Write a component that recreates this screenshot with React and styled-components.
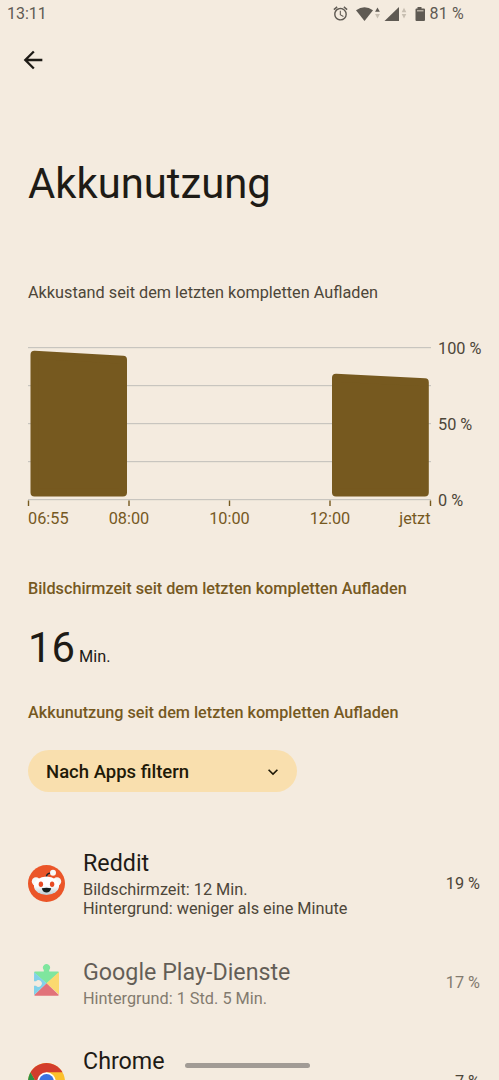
import React from 'react';
import styled, {createGlobalStyle} from 'styled-components';

const GlobalStyle = createGlobalStyle`
  * { box-sizing: border-box; }
  html, body { margin: 0; padding: 0; background: #f4ebdf; }
  body { font-family: Roboto, "Liberation Sans", sans-serif; overflow: hidden; }
  svg { display: block; flex: none; }
`;

const Screen = styled.div`
  width: 499px;
  height: 1080px;
  overflow: hidden;
  background: #f4ebdf;
  color: #1e1b16;
`;

const StatusBar = styled.div`
  display: flex;
  align-items: center;
  justify-content: space-between;
  height: 27px;
  padding: 0 35px 0 7px;
  font-size: 16px;
  color: #5f5a53;
`;

const StatusIcons = styled.div`
  display: flex;
  align-items: center;
`;

const Battery = styled.span`
  margin-left: 4px;
  letter-spacing: 0.2px;
`;

const AppBar = styled.div`
  display: flex;
  align-items: center;
  height: 66px;
  padding-left: 18.5px;
`;

const Content = styled.main`
  padding: 0 19px 0 28px;
`;

const Title = styled.h1`
  margin: 66px 0 0;
  font-size: 41.8px;
  line-height: 50px;
  font-weight: 400;
`;

const ChartTitle = styled.div`
  margin-top: 74px;
  font-size: 16.25px;
  line-height: 20px;
  color: #4d4639;
`;

const Chart = styled.svg`
  margin: 29px 0 0 -28px;
  font-size: 16.3px;
`;

const SectionTitle = styled.h2`
  margin: ${props => props.$top}px 0 0;
  font-size: 16.22px;
  line-height: 20px;
  font-weight: 500;
  color: #76591f;
`;

const ScreenTime = styled.div`
  display: flex;
  align-items: baseline;
  gap: 4px;
  height: 50px;
  margin-top: 24px;
  line-height: 50px;
`;

const Big = styled.span`
  font-size: 41.8px;
`;

const Unit = styled.span`
  font-size: 16.3px;
`;

const Filter = styled.button`
  display: flex;
  align-items: center;
  justify-content: space-between;
  width: 269px;
  height: 42px;
  margin-top: 27px;
  padding: 1px 14px 0 18px;
  border: 0;
  border-radius: 21px;
  background: #f9dfae;
  color: #1f1a08;
  font: 500 18.5px Roboto, sans-serif;
`;

const AppList = styled.div`
  display: flex;
  flex-direction: column;
  gap: 39.5px;
  margin-top: 57px;
`;

const Row = styled.div`
  display: flex;
  align-items: center;
  opacity: ${props => props.$dim ? 0.68 : 1};
`;

const AppIcon = styled.div`
  width: 37px;
  margin: -1px 18px 0 0;
`;

const Info = styled.div`
  flex: 1;
`;

const Name = styled.div`
  padding-bottom: 2px;
  font-size: 23.25px;
  line-height: 29px;
`;

const Detail = styled.div`
  font-size: 16.3px;
  line-height: 19px;
  min-height: 19px;
  color: #4d4639;
`;

const Percent = styled.div`
  font-size: 16.3px;
  color: #4d4639;
`;

const HomeBar = styled.div`
  position: fixed;
  left: 185px;
  top: 1063px;
  width: 125px;
  height: 5px;
  border-radius: 3px;
  background: #a19b95;
`;

const AlarmIcon = () => (
    <svg width="17" height="17" viewBox="0 0 24 24" fill="#5f5a53">
        <path d="M22 5.72l-4.6-3.86-1.29 1.53 4.6 3.86L22 5.72zM7.88 3.39L6.6 1.86 2 5.71l1.29 1.53 4.59-3.85zM12.5 8H11v6l4.75 2.85.75-1.23-4-2.37V8zM12 4c-4.97 0-9 4.03-9 9s4.02 9 9 9a9 9 0 0 0 0-18zm0 16c-3.87 0-7-3.13-7-7s3.13-7 7-7 7 3.13 7 7-3.13 7-7 7z"/>
    </svg>
);

/*Wifi, señal y bateria*/
const SignalIcons = () => (
    <svg width="70" height="16" viewBox="0 0 70 16" style={{marginLeft: 7}}>
        <g fill="#5f5a53">
            <path d="M0 4.2Q8.5-1.8 17 4.2L8.5 15z"/>
            <path d="M19.1 5.8 21.5 1.4 23.9 5.8z"/>
            <path d="M28.5 15H43V1z"/>
            <path d="M61.5 1h4v1.5H68a1 1 0 0 1 1 1V14a1 1 0 0 1-1 1h-7.500a1 1 0 0 1-1-1V3.500a1 1 0 0 1 1-1h1z"/>
        </g>
        <path fill="#c8bfb2" d="M19.1 8h4.800l-2.400 4.400zM45.700 6.200 48 1.800l2.300 4.400zM45.700 8h4.600L48 12.400z"/>
        <path fill="#b5ada2" d="M61 4h6.500v1.500H61z"/>
    </svg>
);

const BackIcon = () => (
    <svg width="28" height="28" viewBox="0 0 24 24" fill="#1e1b16">
        <path d="M20 11H7.83l5.59-5.59L12 4l-8 8 8 8 1.41-1.41L7.83 13H20z"/>
    </svg>
);

const ChevronIcon = () => (
    <svg width="20" height="20" viewBox="0 0 24 24" fill="#1f1a08">
        <path d="M16.59 8.59L12 13.17 7.41 8.59 6 10l6 6 6-6z"/>
    </svg>
);

const RedditIcon = () => (
    <svg width="37" height="37" viewBox="0 0 37 37">
        <defs>
            <linearGradient id="snoo" x1="0" y1="0" x2="0" y2="1">
                <stop offset="0.5" stopColor="#fff"/>
                <stop offset="1" stopColor="#bccbd2"/>
            </linearGradient>
        </defs>
        <circle cx="18.5" cy="18.5" r="18.5" fill="#eb5528"/>
        <path d="M18.3 12.5C18.300 9.800 20 8.200 23 8" fill="none" stroke="#18262b" strokeWidth="1.400"/>
        <circle cx="25" cy="7.800" r="3" fill="#f8fafa"/>
        <circle cx="8" cy="16.500" r="4.200" fill="#f5f8f8"/>
        <circle cx="29" cy="16.500" r="4.200" fill="#f5f8f8"/>
        <ellipse cx="18.500" cy="20.700" rx="12.600" ry="9.200" fill="url(#snoo)"/>
        <ellipse cx="12.900" cy="19.300" rx="2.200" ry="2.700" fill="#e84b24"/>
        <ellipse cx="24.100" cy="19.300" rx="2.200" ry="2.700" fill="#e84b24"/>
        <path d="M13.800 23.200Q18.500 22.400 23.200 23.200C22.500 28.800 14.500 28.800 13.800 23.200z" fill="#15201f"/>
    </svg>
);

const PlayServicesIcon = () => (
    <svg width="37" height="37" viewBox="0 0 37 37">
        <path fill="#49e580" d="M6 8.600q0-1.200 1.200-1.200h8.600v-1.500a3.500 3.500 0 1 1 5.400 0v1.500h8.600q1.200 0 1.200 1.200L18.500 19.500z"/>
        <path fill="#ffd13b" d="M31 8.100v22.500L18.500 19.300z"/>
        <path fill="#d93a4b" d="M6.200 30.900 18.500 19.200 30.900 30.900q-.3.800-1.200.8H7.200q-.8 0-1-.8z"/>
        <path fill="#4cc6ef" d="M6.100 8.200 18.500 19.300 6.200 30.900Q6 30.700 6 30.300V21.700h2a3.300 3.300 0 1 0 0-4.400H6z"/>
    </svg>
);

const ChromeIcon = () => (
    <svg width="37" height="37" viewBox="0 0 37 37">
        <circle cx="18.500" cy="18.500" r="18.500" fill="#fbc02d"/>
        <path fill="#2e9145" d="M2.500 9.250A18.500 18.500 0 0 0 18.500 37L26.500 23.100 10.500 23.100z"/>
        <path fill="#d33d2c" d="M2.500 9.250A18.500 18.500 0 0 1 34.500 9.250H18.500L10.500 23.100z"/>
        <circle cx="18.500" cy="18.500" r="9.250" fill="#fff"/>
        <circle cx="18.500" cy="18.500" r="7.400" fill="#3b73e0"/>
    </svg>
);

const ticks = [
    {x: 28.5, label: '06:55', anchor: 'start', tx: 28},
    {x: 129, label: '08:00', anchor: 'middle', tx: 129},
    {x: 229.5, label: '10:00', anchor: 'middle', tx: 229.5},
    {x: 330, label: '12:00', anchor: 'middle', tx: 330},
    {x: 430.5, label: 'jetzt', anchor: 'end', tx: 430.5},
];

const levels = [
    {y: 22, label: '100 %'},
    {y: 98, label: '50 %'},
    {y: 174, label: '0 %'},
];

const BatteryChart = () => (
    <Chart width="499" height="214" viewBox="0 0 499 214">
        {[15.5, 53.5, 91.5, 129.5, 167.5].map(y => (
            <rect key={y} x="28" y={y - 0.5} width="403" height="1.2" fill="#c8c5bf"/>
        ))}
        <g fill="#76591f" stroke="#76591f" strokeWidth="8" strokeLinejoin="round">
            <path d="M34.5 22.7 123 27.8V160.5H34.5z"/>
            <path d="M336 45.7 424.8 50.3V160.5H336z"/>
        </g>
        {ticks.map(t => (
            <g key={t.label} fill="#76591f">
                <rect x={t.x - 0.7} y="168.5" width="1.4" height="5.5"/>
                <text x={t.tx} y="192" textAnchor={t.anchor}>{t.label}</text>
            </g>
        ))}
        {levels.map(l => (
            <text key={l.label} x="438" y={l.y} fill="#4d4639">{l.label}</text>
        ))}
    </Chart>
);

const apps = [
    {name: 'Reddit', icon: <RedditIcon/>, details: ['Bildschirmzeit: 12 Min.', 'Hintergrund: weniger als eine Minute'], percent: '19 %'},
    {name: 'Google Play-Dienste', icon: <PlayServicesIcon/>, details: ['Hintergrund: 1 Std. 5 Min.'], percent: '17 %', dim: true},
    {name: 'Chrome', icon: <ChromeIcon/>, details: ['', ''], percent: '7 %'},
];

const App = () => (
    <Screen>
        <GlobalStyle/>
        <StatusBar>
            <span>13:11</span>
            <StatusIcons>
                <AlarmIcon/>
                <SignalIcons/>
                <Battery>81 %</Battery>
            </StatusIcons>
        </StatusBar>
        <AppBar><BackIcon/></AppBar>
        <Content>
            <Title>Akkunutzung</Title>
            <ChartTitle>Akkustand seit dem letzten kompletten Aufladen</ChartTitle>
            <BatteryChart/>
            <SectionTitle $top={33}>Bildschirmzeit seit dem letzten kompletten Aufladen</SectionTitle>
            <ScreenTime><Big>16</Big><Unit>Min.</Unit></ScreenTime>
            <SectionTitle $top={30}>Akkunutzung seit dem letzten kompletten Aufladen</SectionTitle>
            <Filter>Nach Apps filtern<ChevronIcon/></Filter>
            <AppList>
                {apps.map(app => (
                    <Row key={app.name} $dim={app.dim}>
                        <AppIcon>{app.icon}</AppIcon>
                        <Info>
                            <Name>{app.name}</Name>
                            {app.details.map((d, i) => <Detail key={i}>{d}</Detail>)}
                        </Info>
                        <Percent>{app.percent}</Percent>
                    </Row>
                ))}
            </AppList>
        </Content>
        <HomeBar/>
    </Screen>
);

export default App;
